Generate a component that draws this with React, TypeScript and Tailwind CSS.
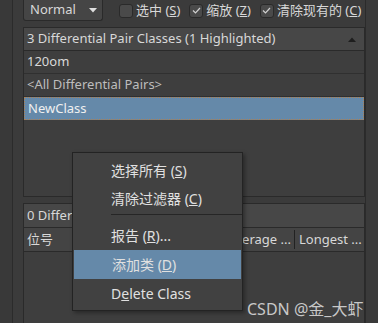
import React from 'react';

const FONT = '"Noto Sans", "Noto Sans CJK SC", sans-serif';

function Check({ checked }: { checked?: boolean }) {
  return (
    <span className="w-[14px] h-[14px] rounded-[3px] border border-[#2a2a2a] bg-[#4a4a4a] flex items-center justify-center shrink-0">
      {checked && (
        <svg width="9" height="7" viewBox="0 0 9 7" fill="none">
          <path d="M1 3.5 L3.5 6 L8 1" stroke="#d0d0d0" strokeWidth="1.2" />
        </svg>
      )}
    </span>
  );
}

function Row({ children, selected }: { children: React.ReactNode; selected?: boolean }) {
  return (
    <div
      className={`h-[23px] flex items-center pl-[3px] border-b text-[13px] ${
        selected
          ? 'bg-[#6589a9] text-[#f0f0f0] border border-dotted border-[#b08050]'
          : 'border-[#303030] text-[#d8d8d8]'
      }`}
    >
      {children}
    </div>
  );
}

export default function App() {
  return (
    <div className="w-[378px] h-[323px] bg-[#3b3b3b] flex relative overflow-hidden" style={{ fontFamily: FONT }}>
      {/* left strip */}
      <div className="w-[13px] border-r border-[#2b2b2b] bg-[#393939]" />

      <div className="flex-1 flex flex-col pl-[10px]">
        {/* toolbar */}
        <div className="h-[27px] flex items-start gap-[16px] text-[13px] text-[#d8d8d8]">
          <div className="w-[80px] h-[21px] bg-[#454545] border border-t-0 border-[#2a2a2a] rounded-b-[3px] flex items-center justify-between pl-[6px] pr-[5px]">
            <span>Normal</span>
            <svg width="8" height="5" viewBox="0 0 8 5">
              <path d="M0 0 H8 L4 4.5 Z" fill="#e0e0e0" />
            </svg>
          </div>
          <div className="flex items-center gap-[9px] h-[21px]">
            <div className="flex items-center gap-[3px]">
              <Check />
              <span>
                选中 (<span className="underline">S</span>)
              </span>
            </div>
            <div className="flex items-center gap-[3px]">
              <Check checked />
              <span>
                缩放 (<span className="underline">Z</span>)
              </span>
            </div>
            <div className="flex items-center gap-[3px] whitespace-nowrap">
              <Check checked />
              <span>
                清除现有的 (<span className="underline">C</span>)
              </span>
            </div>
          </div>
        </div>

        {/* panel 1 */}
        <div className="w-[342px] h-[170px] border border-[#2a2a2a] bg-[#3e3e3e] flex flex-col">
          <div className="h-[23px] bg-[#474747] border-b border-[#2a2a2a] flex items-center justify-between pl-[3px] pr-[8px] text-[13px] text-[#d8d8d8]">
            <span>3 Differential Pair Classes (1 Highlighted)</span>
            <svg width="8" height="5" viewBox="0 0 8 5">
              <path d="M0 5 H8 L4 0.5 Z" fill="#1e1e1e" />
            </svg>
          </div>
          <Row>120om</Row>
          <Row>
            <span className="text-[#bdbdbd]">&lt;All Differential Pairs&gt;</span>
          </Row>
          <Row selected>NewClass</Row>
        </div>

        {/* panel 2 */}
        <div className="mt-[6px] w-[342px] flex-1 border border-[#2a2a2a] border-b-0 bg-[#3e3e3e] flex flex-col">
          <div className="h-[24px] bg-[#474747] border-b border-[#2a2a2a] flex items-center pl-[3px] text-[13px] text-[#d8d8d8]">
            0 Differential Pairs
          </div>
          <div className="h-[24px] bg-[#444444] border-b border-[#2a2a2a] flex items-center text-[13px] text-[#d8d8d8]">
            <span className="w-[200px] pl-[3px]">位号</span>
            <span className="w-[71px] text-right pr-[3px] border-r border-[#222] whitespace-nowrap">Average ...</span>
            <span className="pl-[4px] whitespace-nowrap">Longest ...</span>
          </div>
        </div>
      </div>

      {/* right strip */}
      <div className="w-[13px] border-l border-[#2b2b2b] bg-[#3a3a3a]" />

      {/* context menu */}
      <div className="absolute left-[72px] top-[152px] w-[171px] h-[159px] bg-[#414141] border border-[#232323] shadow-[2px_2px_4px_rgba(0,0,0,0.35)] pt-[3px] text-[14px] text-[#e0e0e0]">
        <div className="h-[28px] flex items-center pl-[38px]">
          选择所有 (<span className="underline">S</span>)
        </div>
        <div className="h-[28px] flex items-center pl-[38px]">
          清除过滤器 (<span className="underline">C</span>)
        </div>
        <div className="ml-[38px] mt-[2px] mb-[5px] border-t border-[#262626]" />
        <div className="h-[30px] flex items-center pl-[38px]">
          报告 (<span className="underline">R</span>)...
        </div>
        <div className="h-[29px] flex items-center pl-[38px] bg-[#6589a9] mx-[1px]">
          添加类 (<span className="underline">D</span>)
        </div>
        <div className="h-[29px] flex items-center pl-[38px]">
          D<span className="underline">e</span>lete Class
        </div>
      </div>

      {/* watermark */}
      <div className="absolute left-[247px] top-[297px] text-[16px] text-[#c8c8c8] whitespace-nowrap">
        CSDN @金_大虾
      </div>
    </div>
  );
}
